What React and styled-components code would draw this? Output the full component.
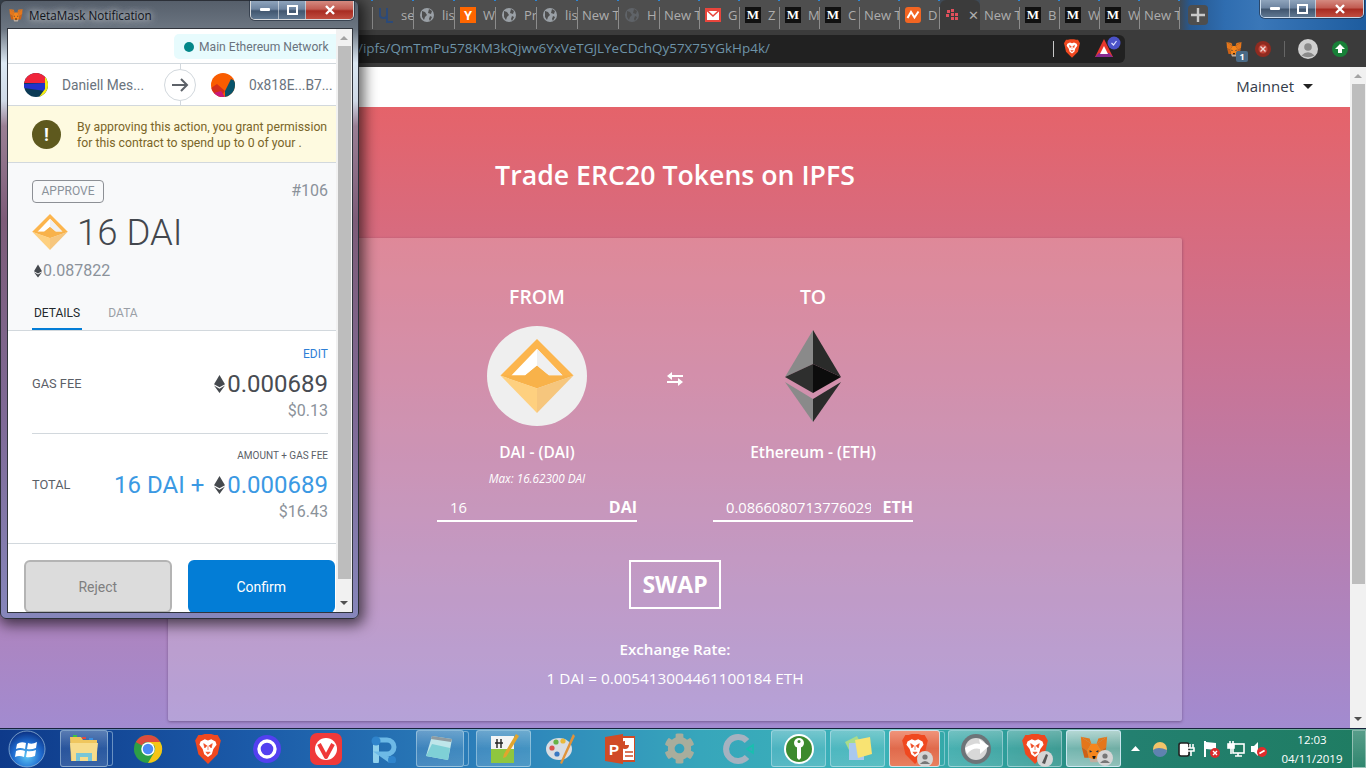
import React from 'react';
import styled, { createGlobalStyle } from 'styled-components';
import { FaCog } from 'react-icons/fa';

const ROBOTO = '"Roboto", "Liberation Sans", sans-serif';
const OPEN = '"Open Sans", "Liberation Sans", sans-serif';

const GlobalStyle = createGlobalStyle`
  html, body { margin: 0; padding: 0; overflow: hidden; }
  body { font-family: ${OPEN}; }
  * { box-sizing: border-box; }
`;

const Desktop = styled.div`
  position: relative;
  width: 1366px;
  height: 768px;
  display: flex;
  flex-direction: column;
  overflow: hidden;
`;

/* ---------- browser chrome ---------- */

const TabStrip = styled.div`
  height: 30px;
  flex: none;
  display: flex;
  align-items: stretch;
  padding-left: 4px;
  background: linear-gradient(90deg, #3f4a56 0, #3f4a56 1180px, #27588f 1190px, #2f6db0 1225px, #3a77b8 1260px, #1d5c9f 1366px);
`;

const Tab = styled.div`
  position: relative;
  width: ${(p) => p.$w}px;
  flex: none;
  display: flex;
  align-items: center;
  padding: 0 0 0 ${(p) => (p.$plain ? 4 : 5)}px;
  overflow: hidden;
  white-space: nowrap;
  font-size: 13px;
  color: #adadad;
  background: ${(p) => (p.$active ? '#3b3b3b' : '#4e4e4e')};
  border-radius: ${(p) => (p.$active ? '6px 6px 0 0' : '0')};
  &::after {
    content: '';
    position: absolute;
    right: 0;
    top: 7px;
    bottom: 1px;
    width: 1px;
    background: ${(p) => (p.$active ? 'transparent' : '#8c8c8c')};
  }
  &::before {
    content: '';
    position: absolute;
    right: 0;
    top: 0;
    width: 2px;
    height: 1px;
    background: #2a86d8;
  }
`;

const TabIcon = styled.span`
  width: 16px;
  height: 16px;
  flex: none;
  margin-right: 7px;
  display: flex;
  align-items: center;
  justify-content: center;
  background: ${(p) => p.$bg || 'transparent'};
  border-radius: ${(p) => p.$round || 0}px;
  color: #fff;
  font: bold 13px ${(p) => (p.$sans ? ROBOTO : '"Liberation Serif", serif')};
`;

const NewTabButton = styled.div`
  width: 20px;
  height: 20px;
  margin: 5px 0 0 8px;
  border-radius: 4px;
  background: #4e4e4e;
  display: flex;
  align-items: center;
  justify-content: center;
`;

const WindowControls = styled.div`
  position: absolute;
  top: 0;
  left: ${(p) => p.$left}px;
  height: ${(p) => p.$h}px;
  display: flex;
  border: 1px solid rgba(255, 255, 255, 0.75);
  border-top: none;
  border-radius: 0 0 5px 5px;
  overflow: hidden;
  box-shadow: 0 0 0 1px rgba(30, 40, 55, 0.6);
`;

const ControlButton = styled.div`
  width: ${(p) => p.$w}px;
  display: flex;
  align-items: center;
  justify-content: center;
  border-right: 1px solid rgba(255, 255, 255, 0.5);
  background: ${(p) =>
    p.$close
      ? 'linear-gradient(180deg, #d58a80 0, #c25c52 45%, #a82c22 55%, #c04d3f 100%)'
      : 'linear-gradient(180deg, #8fa4bc 0, #6d84a0 45%, #41566f 55%, #5f7791 100%)'};
  &:last-child { border-right: none; }
`;

const Toolbar = styled.div`
  height: 37px;
  flex: none;
  background: #3b3b3b;
  display: flex;
  align-items: center;
  padding-left: 340px;
`;

const AddressField = styled.div`
  width: 785px;
  height: 28px;
  background: #212121;
  border-radius: 0 6px 6px 0;
  display: flex;
  align-items: center;
  padding: 0 0 0 18px;
  font-size: 13.45px;
  color: #6d93a8;
  white-space: nowrap;
`;

const UrlText = styled.span`
  width: 696px;
  padding-bottom: 2px;
`;

const AddressDivider = styled.i`
  width: 1px;
  height: 16px;
  background: #c8c8c8;
`;

const AddressIcon = styled.span`
  display: flex;
  margin-left: ${(p) => p.$ml}px;
`;

const ExtensionTray = styled.div`
  display: flex;
  align-items: center;
  margin-left: 101px;
`;

const ExtensionSlot = styled.span`
  position: relative;
  display: flex;
  margin-left: ${(p) => p.$ml}px;
`;

const ExtBadge = styled.span`
  position: absolute;
  right: -6px;
  bottom: -5px;
  width: 12px;
  height: 11px;
  background: #4a6a86;
  color: #fff;
  border-radius: 2px;
  font: bold 9px/11px ${OPEN};
  text-align: center;
`;

const ToolbarSep = styled.i`
  width: 1px;
  height: 16px;
  margin-left: 13px;
  background: #666;
`;

/* ---------- page ---------- */

const PageRow = styled.div`
  flex: 1;
  min-height: 0;
  display: flex;
`;

const Page = styled.div`
  width: 1350px;
  display: flex;
  flex-direction: column;
  background: #fff;
`;

const NavBar = styled.div`
  height: 40px;
  flex: none;
  display: flex;
  align-items: center;
  justify-content: flex-end;
  padding: 0 37px 2px 0;
  color: #333c4a;
  font-size: 15px;
`;

const Caret = styled.i`
  margin-left: 9px;
  width: 0;
  height: 0;
  border: 5px solid transparent;
  border-top: 5px solid #222;
  border-bottom: none;
`;

const Hero = styled.main`
  flex: 1;
  display: flex;
  flex-direction: column;
  align-items: center;
  background: linear-gradient(180deg, #e5636a 0%, #a28bd0 100%);
  color: #fff;
`;

const Title = styled.h1`
  margin: 50px 0 0;
  height: 81px;
  line-height: 35px;
  font-size: 26.7px;
  font-weight: 600;
`;

const Card = styled.section`
  width: 1014px;
  height: 483px;
  border-radius: 2px;
  background: rgba(255, 255, 255, 0.2);
  box-shadow: 0 1px 3px rgba(60, 30, 70, 0.45);
  display: flex;
  flex-direction: column;
  align-items: center;
  padding-top: 46px;
`;

const SwapGrid = styled.div`
  display: grid;
  grid-template-columns: 200px 76px 200px;
`;

const Side = styled.div`
  display: flex;
  flex-direction: column;
  align-items: center;
`;

const SideHead = styled.h2`
  margin: 0;
  height: 26px;
  line-height: 26px;
  font-size: 19.4px;
  font-weight: 600;
`;

const TokenCircle = styled.div`
  width: 100px;
  height: 100px;
  margin-top: 16px;
  border-radius: 50%;
  background: ${(p) => (p.$plain ? 'transparent' : '#efefef')};
  display: flex;
  align-items: center;
  justify-content: center;
`;

const TokenName = styled.div`
  margin-top: 16px;
  height: 20px;
  line-height: 20px;
  font-size: 15.5px;
  font-weight: 600;
`;

const MaxLabel = styled.div`
  margin-top: 8px;
  height: 16px;
  line-height: 16px;
  font-size: 11.7px;
  font-style: italic;
`;

const AmountRow = styled.div`
  width: 200px;
  height: 27px;
  margin-top: 9px;
  border-bottom: 2px solid #fff;
  display: flex;
  align-items: center;
  justify-content: space-between;
  padding: 0 0 1px 13px;
  font-size: 14.7px;
  white-space: nowrap;
`;

const AmountValue = styled.span`
  width: 145px;
  overflow: hidden;
`;

const AmountUnit = styled.b`
  font-size: 16px;
  font-weight: 700;
`;

const SwapArrowsCell = styled.div`
  display: flex;
  justify-content: center;
  padding-top: 88px;
`;

const SwapButton = styled.button`
  width: 92px;
  height: 49px;
  margin-top: 38px;
  border: 2px solid #fff;
  background: transparent;
  color: #fff;
  font: 700 23px ${OPEN};
  padding: 0 0 1px;
`;

const RateLabel = styled.div`
  margin-top: 30px;
  height: 20px;
  line-height: 20px;
  font-size: 15.2px;
  font-weight: 600;
`;

const RateValue = styled.div`
  margin-top: 9px;
  height: 20px;
  line-height: 20px;
  font-size: 15.3px;
`;

const PageScroll = styled.div`
  width: 16px;
  background: #f1f1f1;
  display: flex;
  flex-direction: column;
  align-items: center;
`;

const ScrollArrow = styled.i`
  width: 0;
  height: 0;
  border-left: 4px solid transparent;
  border-right: 4px solid transparent;
  ${(p) => (p.$down ? 'border-top: 4px solid #505050;' : 'border-bottom: 4px solid #a3a3a3;')}
  margin: ${(p) => (p.$down ? 'auto 0 7px' : '7px 0 6px')};
`;

const ScrollThumb = styled.div`
  width: 13px;
  height: ${(p) => p.$h}px;
  background: #bdbdbd;
  flex: none;
`;

/* ---------- taskbar ---------- */

const Taskbar = styled.footer`
  height: 40px;
  flex: none;
  display: flex;
  align-items: stretch;
  border-top: 1px solid #17233c;
  box-shadow: inset 0 1px 0 rgba(255, 255, 255, 0.35);
  background: linear-gradient(90deg, #0e3a8a 0, #1b5aa8 250px, #2d82bb 500px, #37a6bb 700px, #3bb3b8 880px, #2f9f9c 1000px, #238070 1130px, #1f7c62 1366px);
`;

const TaskButton = styled.div`
  position: relative;
  width: ${(p) => p.$w}px;
  margin: 1px 0 1px ${(p) => p.$ml || 0}px;
  flex: none;
  display: flex;
  align-items: center;
  justify-content: center;
  border: 1px solid rgba(210, 235, 245, ${(p) => (p.$light || p.$hot ? 0.9 : 0.45)});
  border-radius: 3px;
  background: ${(p) => {
    if (p.$hot) return 'linear-gradient(180deg, #f0947a, #e06a4c 50%, #e9805f)';
    if (p.$light) return 'linear-gradient(180deg, rgba(255,255,255,.65), rgba(255,255,255,.35) 50%, rgba(255,255,255,.5))';
    return 'linear-gradient(180deg, rgba(255,255,255,.3), rgba(255,255,255,.1) 50%, rgba(255,255,255,.16))';
  }};
  ${(p) =>
    p.$stack &&
    `&::after {
      content: '';
      position: absolute;
      top: 0;
      bottom: 0;
      right: -6px;
      width: 4px;
      border: 1px solid rgba(210, 235, 245, .45);
      border-left: none;
      border-radius: 0 3px 3px 0;
    }`}
`;

const TaskSlot = styled.div`
  width: ${(p) => p.$w}px;
  margin-left: ${(p) => p.$ml || 0}px;
  flex: none;
  display: flex;
  align-items: center;
  justify-content: center;
`;

const TrayArea = styled.div`
  margin-left: 4px;
  flex: 1;
  display: flex;
  align-items: center;
  color: #fff;
`;

const TrayItem = styled.span`
  display: flex;
  margin-left: ${(p) => p.$ml}px;
`;

const Clock = styled.div`
  margin-left: 9px;
  width: 70px;
  text-align: center;
  font-size: 11.5px;
  line-height: 19px;
`;

const ShowDesktop = styled.div`
  width: 14px;
  margin-left: auto;
  align-self: stretch;
  margin-top: 1px;
  border: 1px solid rgba(255, 255, 255, 0.4);
  background: linear-gradient(180deg, rgba(255,255,255,.25), rgba(255,255,255,.08));
`;

const StackedIcon = styled.span`
  position: relative;
  display: flex;
`;

const UserOverlay = styled.span`
  position: absolute;
  right: -5px;
  bottom: -3px;
  width: 16px;
  height: 16px;
  border-radius: 50%;
  background: #d5d5d5;
  display: flex;
  align-items: center;
  justify-content: center;
`;

/* ---------- metamask popup ---------- */

const Popup = styled.div`
  position: absolute;
  left: 0;
  top: 0;
  width: 359px;
  height: 619px;
  padding: 28px 6px 6px 7px;
  border: 1px solid #2c3038;
  border-radius: 6px;
  box-shadow: 2px 3px 14px 3px rgba(0, 0, 0, 0.62);
  background: linear-gradient(180deg, #565f6b 0, #6b7581 28px, #dce8f3 62px, #cfd9e6 100px, #9a7f94 125px, #7d5c78 220px, #7f6a97 420px, #8686bb 100%);
`;

const PopupTitle = styled.div`
  position: absolute;
  left: 8px;
  top: 6px;
  display: flex;
  align-items: center;
  gap: 6px;
  font-size: 11.7px;
  line-height: 16px;
  color: #10131a;
  text-shadow: 0 0 7px #c9ccd0, 0 0 7px #c9ccd0;
`;

const PopupClient = styled.div`
  width: 100%;
  height: 100%;
  display: flex;
  background: #fff;
  outline: 1px solid #30343c;
  overflow: hidden;
  font-family: ${ROBOTO};
`;

const PopupBody = styled.div`
  width: 328px;
  flex: none;
  display: flex;
  flex-direction: column;
`;

const NetworkRow = styled.div`
  height: 35px;
  flex: none;
  display: flex;
  justify-content: flex-end;
  padding-top: 5px;
  border-bottom: 1px solid #d2d8dd;
`;

const NetworkPill = styled.div`
  width: 162px;
  height: 25px;
  background: #e7fbfd;
  border-radius: 5px 0 0 5px;
  display: flex;
  align-items: center;
  padding-left: 10px;
  font-size: 12.1px;
  color: #6a737d;
  white-space: nowrap;
`;

const NetDot = styled.i`
  width: 10px;
  height: 10px;
  margin-right: 5px;
  border-radius: 50%;
  background: #038789;
`;

const AccountsRow = styled.div`
  position: relative;
  height: 42px;
  flex: none;
  display: flex;
  align-items: center;
  border-bottom: 1px solid #d2d8dd;
  font-size: 13.75px;
  color: #6a737d;
  white-space: nowrap;
`;

const AccountSide = styled.div`
  width: ${(p) => p.$w}px;
  display: flex;
  align-items: center;
  padding-left: ${(p) => p.$pl}px;
  gap: ${(p) => p.$gap}px;
`;

const ArrowCircle = styled.div`
  position: relative;
  width: 32px;
  height: 32px;
  flex: none;
  border: 1px solid #d2d8dd;
  border-radius: 50%;
  background: #fff;
  display: flex;
  align-items: center;
  justify-content: center;
  &::before, &::after {
    content: '';
    position: absolute;
    left: 14.5px;
    width: 1px;
    height: 5px;
    background: #d2d8dd;
  }
  &::before { top: -6px; }
  &::after { bottom: -6px; }
`;

const WarnRow = styled.div`
  height: 57px;
  flex: none;
  display: flex;
  align-items: center;
  padding-left: 24px;
  gap: 16px;
  background: #fefae0;
  border-bottom: 1px solid #d2d8dd;
  font-size: 12.25px;
  line-height: 16px;
  color: #7a6528;
  white-space: nowrap;
`;

const WarnText = styled.div`
  padding-top: 2px;
`;

const WarnIcon = styled.span`
  width: 29px;
  height: 29px;
  flex: none;
  border-radius: 50%;
  background: #5e591e;
  color: #fff;
  font: bold 18px/29px ${ROBOTO};
  text-align: center;
`;

const Summary = styled.div`
  height: 168px;
  flex: none;
  padding: 17px 8px 0 24px;
  background: #f8f9fa;
  border-bottom: 1px solid #d2d8dd;
  display: flex;
  flex-direction: column;
`;

const SummaryTop = styled.div`
  height: 23px;
  display: flex;
  align-items: center;
  justify-content: space-between;
  color: #8b929a;
`;

const ActionBadge = styled.span`
  width: 72px;
  height: 23px;
  border: 1px solid #8d9095;
  border-radius: 4px;
  font-size: 12px;
  line-height: 21px;
  text-align: center;
`;

const Nonce = styled.span`
  font-size: 16px;
  padding-bottom: 2px;
`;

const BigAmount = styled.div`
  margin-top: 11px;
  height: 36px;
  display: flex;
  align-items: center;
  gap: 9px;
  font-size: 36.5px;
  font-weight: 300;
  color: #43474d;
`;

const EthAmount = styled.div`
  margin-top: 11px;
  height: 19px;
  display: flex;
  align-items: center;
  gap: 1px;
  padding-left: 2px;
  font-size: 16px;
  color: #8b929a;
`;

const TabsRow = styled.div`
  margin-top: auto;
  height: 25px;
  display: flex;
  font-size: 12px;
`;

const DetailTab = styled.div`
  width: ${(p) => p.$w}px;
  margin-right: ${(p) => p.$mr || 0}px;
  padding-top: 1px;
  text-align: center;
  color: ${(p) => (p.$on ? '#24292e' : '#9a9fa6')};
  border-bottom: 2px solid ${(p) => (p.$on ? '#037dd6' : 'transparent')};
`;

const Details = styled.div`
  height: 213px;
  flex: none;
  padding: 0 8px 0 24px;
  border-bottom: 1px solid #d2d8dd;
  display: flex;
  flex-direction: column;
`;

const SmallRight = styled.div`
  margin-top: ${(p) => p.$mt}px;
  height: 14px;
  line-height: 14px;
  text-align: right;
  font-size: ${(p) => p.$size}px;
  color: ${(p) => p.$color};
`;

const FeeRow = styled.div`
  margin-top: ${(p) => p.$mt}px;
  height: 28px;
  display: flex;
  align-items: center;
  justify-content: space-between;
`;

const FeeLabel = styled.span`
  padding-bottom: 2px;
  font-size: 12.8px;
  color: #5b6067;
`;

const FeeValue = styled.span`
  display: flex;
  align-items: center;
  gap: 2px;
  font-size: 24px;
  color: ${(p) => (p.$blue ? '#3b99e3' : '#484c52')};
`;

const TokenPart = styled.span`
  margin-right: 8px;
`;

const FiatValue = styled.div`
  height: 20px;
  margin-top: 3px;
  line-height: 20px;
  text-align: right;
  font-size: 16px;
  color: #8b929a;
`;

const Divider = styled.hr`
  width: 100%;
  margin: 12px 0 0;
  border: none;
  border-top: 1px solid #d2d8dd;
`;

const PopupFooter = styled.div`
  flex: 1;
  display: flex;
  padding: 16px 1px 0 16px;
  gap: 16px;
  overflow: hidden;
`;

const PopupButton = styled.button`
  flex: 1;
  height: 53px;
  padding: 0;
  border-radius: 6px;
  font: 14px ${ROBOTO};
  border: 2px solid ${(p) => (p.$primary ? '#037dd6' : '#b4b4b4')};
  background: ${(p) => (p.$primary ? '#037dd6' : '#dcdcdc')};
  color: ${(p) => (p.$primary ? '#fff' : '#7f7f7f')};
`;

const PopupScroll = styled(PageScroll)`
  flex: none;
`;

/* ---------- drawings ---------- */

const DaiMark = ({ size }) => (
  <svg width={size} height={size} viewBox="13 13 74 75">
    <polygon points="50,13 87,50 50,63 13,50" fill="#fcb54d" />
    <polygon points="50,23 76,50 62,50 50,40 38,50 24,50" fill="#fff" />
    <polygon points="50,23 76,50 62,50 50,40" fill="#f0f0f0" />
    <polygon points="13,50 38,50 50,40 62,50 87,50 50,63" fill="#f8b24a" />
    <polygon points="13,50 50,63 50,88" fill="#fed07f" />
    <polygon points="87,50 50,63 50,88" fill="#f6c67d" />
  </svg>
);

const EthLogo = () => (
  <svg width="56" height="92" viewBox="0 0 56 92">
    <polygon points="28,0 0,47 28,34" fill="#8a8a8a" />
    <polygon points="28,0 56,47 28,34" fill="#2a2b2a" />
    <polygon points="0,47 28,34 28,63" fill="#2e2f2e" />
    <polygon points="56,47 28,34 28,63" fill="#0c0c0c" />
    <polygon points="0,52 28,69 28,92" fill="#8a8a8a" />
    <polygon points="56,52 28,69 28,92" fill="#2a2b2a" />
  </svg>
);

const EthGlyph = ({ w = 11, h = 18 }) => (
  <svg width={w} height={h} viewBox="0 0 56 92">
    <polygon points="28,0 0,47 28,63 56,47" fill="#45494e" />
    <polygon points="0,54 28,70 56,54 28,92" fill="#45494e" />
  </svg>
);

const SwapArrows = () => (
  <svg width="16" height="14" viewBox="0 0 16 14">
    <path d="M5 0 L0 4 L5 8 V5 H16 V3 H5Z" fill="#fff" />
    <path d="M11 6 L16 10 L11 14 V11 H0 V9 H11Z" fill="#fff" />
  </svg>
);

const Globe = ({ dim }) => (
  <svg width="16" height="16" viewBox="0 0 16 16">
    <circle cx="8" cy="8" r="7" fill={dim ? '#5f6368' : '#9aa0a6'} />
    <path d="M3 4l3 1 2 3-2 2-1 3-2-3zM10 2l3 2-1 3-3-1zM11 9l2 1-2 4-1-2z" fill="#4e4e4e" />
  </svg>
);

const Gmail = () => (
  <svg width="16" height="14" viewBox="0 0 16 14">
    <rect width="16" height="14" fill="#e8453c" />
    <rect x="2" y="3" width="12" height="9" fill="#fff" />
    <path d="M2 2.5 L8 8 L14 2.5" stroke="#e8453c" strokeWidth="1.6" fill="none" />
  </svg>
);

const Squiggle = () => (
  <svg width="16" height="16" viewBox="0 0 16 16">
    <rect width="16" height="16" rx="3" fill="#f26522" />
    <path d="M2.5 11 L6 5 L9.5 10.5 L13.5 4.5" stroke="#fff" strokeWidth="2" fill="none" />
  </svg>
);

const DotsFavicon = () => (
  <svg width="16" height="16" viewBox="0 0 16 16" fill="#e0505c">
    <rect x="2" y="3" width="3" height="3" />
    <rect x="6" y="2" width="3" height="3" />
    <rect x="1" y="7" width="3" height="3" />
    <rect x="6" y="6" width="3" height="3" />
    <rect x="10" y="6" width="3" height="3" />
    <rect x="6" y="10" width="3" height="3" />
    <rect x="10" y="10" width="3" height="3" />
  </svg>
);

const UlFavicon = () => (
  <svg width="16" height="17" viewBox="0 0 16 17" fill="none" stroke="#2c4a78" strokeWidth="2">
    <path d="M2 1 V8 Q2 11 6 11 Q9 11 9 8 V1" />
    <path d="M9 6 V15 H15" />
  </svg>
);

const Fox = ({ size }) => (
  <svg width={size} height={size} viewBox="0 0 32 32">
    <polygon points="1,2 13,10 11,4" fill="#e2761b" />
    <polygon points="31,2 19,10 21,4" fill="#e2761b" />
    <polygon points="1,2 13,10 8,18 2,14" fill="#e4761b" />
    <polygon points="31,2 19,10 24,18 30,14" fill="#e4761b" />
    <polygon points="13,10 19,10 24,18 22,26 16,28 10,26 8,18" fill="#f6851b" />
    <polygon points="8,18 2,14 5,26 10,26" fill="#cd6116" />
    <polygon points="24,18 30,14 27,26 22,26" fill="#cd6116" />
    <polygon points="10,26 16,28 22,26 20,31 12,31" fill="#c0ad9e" />
    <polygon points="11,17 14,19 11,20" fill="#233447" />
    <polygon points="21,17 18,19 21,20" fill="#233447" />
    <polygon points="14,24 18,24 17,27 15,27" fill="#161616" />
  </svg>
);

const BraveLion = ({ w, h }) => (
  <svg width={w} height={h} viewBox="0 0 24 28">
    <path d="M6 1 L9 0 H15 L18 1 L21 1 L24 6 L23 10 L21 19 L15 25 L12 28 L9 25 L3 19 L1 10 L0 6 L3 1Z" fill="#f0481f" />
    <path d="M5 7 L9 5 L12 6 L15 5 L19 7 L20 10 L17 14 L15.5 19 L12 21.5 L8.5 19 L7 14 L4 10Z" fill="#fff" />
    <path d="M8 9 L11 11 L9 13Z M16 9 L13 11 L15 13Z M10 17 H14 L12 19Z M12 11 V15" fill="#f0481f" stroke="#f0481f" strokeWidth=".6" />
  </svg>
);

const BatTriangle = () => (
  <svg width="30" height="26" viewBox="0 0 30 26">
    <polygon points="9,3 18,21 0,21" fill="#e8372c" />
    <polygon points="0,21 18,21 14,17 4,17" fill="#8a2a90" />
    <polygon points="9,10 13,18 5,18" fill="#fff" />
    <circle cx="19" cy="7" r="6.5" fill="#4b52c8" />
    <path d="M16.5 7 L18.5 9 L21.5 5" stroke="#dfe3ff" strokeWidth="1.2" fill="none" />
  </svg>
);

const RoundBadge = ({ r, bg, children }) => (
  <svg width={r * 2} height={r * 2} viewBox={`0 0 ${r * 2} ${r * 2}`}>
    <circle cx={r} cy={r} r={r} fill={bg} />
    {children}
  </svg>
);

const Identicon = ({ kind }) => (
  <svg width="24" height="24" viewBox="0 0 24 24">
    <defs>
      <clipPath id={`id-${kind}`}>
        <circle cx="12" cy="12" r="12" />
      </clipPath>
    </defs>
    {kind === 'a' ? (
      <g clipPath="url(#id-a)">
        <rect width="24" height="24" fill="#0b3a55" />
        <rect y="0" width="22" height="10" fill="#f0243a" />
        <polygon points="0,11 21,10 21,18 0,15" fill="#2233cc" />
        <polygon points="21,2 24,2 24,22 15,24 21,16" fill="#f6ee10" />
      </g>
    ) : (
      <g clipPath="url(#id-b)">
        <rect width="24" height="24" fill="#f95c00" />
        <polygon points="0,15 6,11 14,18 10,24 0,24" fill="#d42f1a" />
        <polygon points="3,20 10,18 14,24 4,24" fill="#c9197a" />
        <polygon points="20,6 24,8 24,24 14,24 14,18" fill="#08536a" />
      </g>
    )}
  </svg>
);

const Chrome = () => (
  <svg width="30" height="30" viewBox="0 0 32 32">
    <circle cx="16" cy="16" r="15" fill="#2d9f46" />
    <path d="M16 1 A15 15 0 0 1 29 8.5 H16 A7.5 7.5 0 0 0 9.5 12.2 L3 8.5 A15 15 0 0 1 16 1Z" fill="#dd4b3e" />
    <path d="M29 8.5 A15 15 0 0 1 16 31 L22.5 19.7 A7.5 7.5 0 0 0 22.5 12 L16 8.5Z" fill="#f5c518" />
    <circle cx="16" cy="16" r="7.2" fill="#fff" />
    <circle cx="16" cy="16" r="5.6" fill="#4c8bf5" />
  </svg>
);

const Orb = () => (
  <svg width="38" height="38" viewBox="0 0 38 38">
    <defs>
      <radialGradient id="orb" cx="50%" cy="70%" r="70%">
        <stop offset="0" stopColor="#5cc6f5" />
        <stop offset=".55" stopColor="#1f6cd0" />
        <stop offset="1" stopColor="#0b2f80" />
      </radialGradient>
    </defs>
    <circle cx="19" cy="19" r="18" fill="url(#orb)" stroke="#9fc3e0" strokeOpacity=".7" />
    <path d="M9 14 Q13 11 18 13 L17 19 Q12 17 8 19Z M20 13 Q24 15 29 12 L28 18 Q23 20 19 19Z M8 21 Q12 19 17 21 L16 27 Q11 25 7 27Z M19 21 Q23 22 28 20 L27 26 Q22 28 18 27Z" fill="#fff" />
  </svg>
);

const Folder = () => (
  <svg width="32" height="32" viewBox="0 0 32 32">
    <path d="M2 4 H13 L15 7 H29 V28 H3Z" fill="#efc65e" />
    <rect x="5" y="2" width="4" height="2" fill="#3ec43e" />
    <rect x="14" y="4" width="4" height="2" fill="#e0483e" />
    <rect x="21" y="5" width="4" height="2" fill="#3b8fe0" />
    <path d="M2 10 H30 L28 28 H4Z" fill="#f7dc8c" />
    <path d="M8 20 H24 V28 H20 V24 H12 V28 H8Z" fill="#79c6d8" />
  </svg>
);

const TaskSvg = ({ w = 28, h = 28, view = '0 0 28 28', children }) => (
  <svg width={w} height={h} viewBox={view}>
    {children}
  </svg>
);

const UserGlyph = () => (
  <svg width="12" height="12">
    <circle cx="6" cy="4" r="2.6" fill="#777" />
    <path d="M1 11 Q6 5 11 11Z" fill="#777" />
  </svg>
);

const HIDDEN_TAB = { label: '', plain: true };

const TABS = [
  ...Array(8).fill(HIDDEN_TAB),
  { label: 'Re', plain: true },
  { icon: <UlFavicon />, label: 'se' },
  { icon: <Globe />, label: 'lis' },
  { icon: 'Y', bg: '#ff6600', label: 'W', sans: true },
  { icon: <Globe />, label: 'Pr' },
  { icon: <Globe />, label: 'lis' },
  { label: 'New T', plain: true },
  { icon: <Globe dim />, label: 'H' },
  { label: 'New T', plain: true },
  { icon: <Gmail />, label: 'G' },
  { icon: 'M', bg: '#111', label: 'Z' },
  { icon: 'M', bg: '#111', label: 'M' },
  { icon: 'M', bg: '#111', label: 'C' },
  { label: 'New T', plain: true },
  { icon: <Squiggle />, label: 'D' },
  { icon: <DotsFavicon />, label: '✕', active: true },
  { label: 'New T', plain: true },
  { icon: 'M', bg: '#111', label: 'B' },
  { icon: 'M', bg: '#111', label: 'W' },
  { icon: 'M', bg: '#111', label: 'W' },
  { label: 'New T', plain: true },
];

const WinGlyphs = ({ w }) => (
  <>
    <ControlButton $w={w[0]}>
      <svg width="10" height="4"><rect width="10" height="3" rx="1" fill="#fff" /></svg>
    </ControlButton>
    <ControlButton $w={w[1]}>
      <svg width="11" height="10"><rect x="1" y="1" width="9" height="8" fill="none" stroke="#fff" strokeWidth="2" /></svg>
    </ControlButton>
    <ControlButton $w={w[2]} $close>
      <svg width="12" height="10"><path d="M2 1 L10 9 M10 1 L2 9" stroke="#fff" strokeWidth="2.4" /></svg>
    </ControlButton>
  </>
);

const MetaMaskPopup = () => (
  <Popup>
    <PopupTitle>
      <Fox size={14} />
      MetaMask Notification
    </PopupTitle>
    <WindowControls $left={249} $h={19}>
      <WinGlyphs w={[28, 27, 47]} />
    </WindowControls>
    <PopupClient>
      <PopupBody>
        <NetworkRow>
          <NetworkPill>
            <NetDot />
            Main Ethereum Network
          </NetworkPill>
        </NetworkRow>
        <AccountsRow>
          <AccountSide $w={156} $pl={16} $gap={14}>
            <Identicon kind="a" />
            Daniell Mes...
          </AccountSide>
          <ArrowCircle>
            <svg width="18" height="16" viewBox="0 0 18 16" fill="none" stroke="#5d6269" strokeWidth="2">
              <path d="M1 8 H16 M10 2 L16 8 L10 14" />
            </svg>
          </ArrowCircle>
          <AccountSide $w={140} $pl={15} $gap={14}>
            <Identicon kind="b" />
            0x818E...B7...
          </AccountSide>
        </AccountsRow>
        <WarnRow>
          <WarnIcon>!</WarnIcon>
          <WarnText>
            By approving this action, you grant permission
            <br />
            for this contract to spend up to 0 of your .
          </WarnText>
        </WarnRow>
        <Summary>
          <SummaryTop>
            <ActionBadge>APPROVE</ActionBadge>
            <Nonce>#106</Nonce>
          </SummaryTop>
          <BigAmount>
            <DaiMark size={36} />
            16 DAI
          </BigAmount>
          <EthAmount>
            <EthGlyph w={8} h={14} />
            0.087822
          </EthAmount>
          <TabsRow>
            <DetailTab $w={50} $mr={25} $on>DETAILS</DetailTab>
            <DetailTab $w={32}>DATA</DetailTab>
          </TabsRow>
        </Summary>
        <Details>
          <SmallRight $mt={16} $size={12} $color="#2f7fd6">EDIT</SmallRight>
          <FeeRow $mt={9}>
            <FeeLabel>GAS FEE</FeeLabel>
            <FeeValue><EthGlyph />0.000689</FeeValue>
          </FeeRow>
          <FiatValue>$0.13</FiatValue>
          <Divider />
          <SmallRight $mt={15} $size={10} $color="#5b6067">AMOUNT + GAS FEE</SmallRight>
          <FeeRow $mt={8}>
            <FeeLabel>TOTAL</FeeLabel>
            <FeeValue $blue><TokenPart>16 DAI +</TokenPart><EthGlyph />0.000689</FeeValue>
          </FeeRow>
          <FiatValue>$16.43</FiatValue>
        </Details>
        <PopupFooter>
          <PopupButton>Reject</PopupButton>
          <PopupButton $primary>Confirm</PopupButton>
        </PopupFooter>
      </PopupBody>
      <PopupScroll>
        <ScrollArrow />
        <ScrollThumb $h={533} />
        <ScrollArrow $down />
      </PopupScroll>
    </PopupClient>
  </Popup>
);

const App = () => (
  <Desktop>
    <GlobalStyle />
    <TabStrip>
      {TABS.map((t, i) => (
        <Tab key={i} $w={i < 16 ? 41 : 40} $plain={t.plain} $active={t.active}>
          {t.icon && <TabIcon $bg={t.bg} $sans={t.sans}>{t.icon}</TabIcon>}
          {t.label}
        </Tab>
      ))}
      <NewTabButton>
        <svg width="14" height="14"><path d="M7 0 V14 M0 7 H14" stroke="#c9c9c9" strokeWidth="2.4" /></svg>
      </NewTabButton>
    </TabStrip>
    <WindowControls $left={1260} $h={18}>
      <WinGlyphs w={[29, 26, 47]} />
    </WindowControls>
    <Toolbar>
      <AddressField>
        <UrlText>/ipfs/QmTmPu578KM3kQjwv6YxVeTGJLYeCDchQy57X75YGkHp4k/</UrlText>
        <AddressDivider />
        <AddressIcon $ml={10}><BraveLion w={16} h={19} /></AddressIcon>
        <AddressIcon $ml={15}><BatTriangle /></AddressIcon>
      </AddressField>
      <ExtensionTray>
        <ExtensionSlot $ml={0}>
          <Fox size={16} />
          <ExtBadge>1</ExtBadge>
        </ExtensionSlot>
        <ExtensionSlot $ml={13}>
          <RoundBadge r={8} bg="#8f2b20">
            <circle cx="8" cy="8" r="4.5" fill="#c4473a" />
            <path d="M5.5 5.5 L10.5 10.5 M10.5 5.5 L5.5 10.5" stroke="#f1d7d3" strokeWidth="1.4" />
          </RoundBadge>
        </ExtensionSlot>
        <ToolbarSep />
        <ExtensionSlot $ml={13}>
          <RoundBadge r={10} bg="#cfcfcf">
            <circle cx="10" cy="8" r="3.8" fill="#8a8a8a" />
            <path d="M3.5 16.5 Q10 10 16.5 16.5 Q10 20 3.5 16.5Z" fill="#8a8a8a" />
          </RoundBadge>
        </ExtensionSlot>
        <ExtensionSlot $ml={14}>
          <RoundBadge r={8} bg="#188038">
            <path d="M8 3 L13 8 H10 V12 H6 V8 H3Z" fill="#fff" />
          </RoundBadge>
        </ExtensionSlot>
      </ExtensionTray>
    </Toolbar>
    <PageRow>
      <Page>
        <NavBar>
          Mainnet
          <Caret />
        </NavBar>
        <Hero>
          <Title>Trade ERC20 Tokens on IPFS</Title>
          <Card>
            <SwapGrid>
              <Side>
                <SideHead>FROM</SideHead>
                <TokenCircle><DaiMark size={74} /></TokenCircle>
                <TokenName>DAI - (DAI)</TokenName>
                <MaxLabel>Max: 16.62300 DAI</MaxLabel>
                <AmountRow>
                  <AmountValue>16</AmountValue>
                  <AmountUnit>DAI</AmountUnit>
                </AmountRow>
              </Side>
              <SwapArrowsCell><SwapArrows /></SwapArrowsCell>
              <Side>
                <SideHead>TO</SideHead>
                <TokenCircle $plain><EthLogo /></TokenCircle>
                <TokenName>Ethereum - (ETH)</TokenName>
                <MaxLabel />
                <AmountRow>
                  <AmountValue>0.086608071377602976</AmountValue>
                  <AmountUnit>ETH</AmountUnit>
                </AmountRow>
              </Side>
            </SwapGrid>
            <SwapButton>SWAP</SwapButton>
            <RateLabel>Exchange Rate:</RateLabel>
            <RateValue>1 DAI = 0.005413004461100184 ETH</RateValue>
          </Card>
        </Hero>
      </Page>
      <PageScroll>
        <ScrollArrow />
        <ScrollThumb $h={500} />
        <ScrollArrow $down />
      </PageScroll>
    </PageRow>
    <Taskbar>
      <TaskSlot $w={54}><Orb /></TaskSlot>
      <TaskButton $w={48} $ml={6} $stack><Folder /></TaskButton>
      <TaskSlot $w={60} $ml={10}><Chrome /></TaskSlot>
      <TaskSlot $w={59}><BraveLion w={26} h={30} /></TaskSlot>
      <TaskSlot $w={59}>
        <RoundBadge r={14} bg="#5340f0">
          <circle cx="14" cy="14" r="8" fill="none" stroke="#fff" strokeWidth="3.4" />
        </RoundBadge>
      </TaskSlot>
      <TaskSlot $w={59}>
        <TaskSvg w={32} h={32} view="0 0 32 32">
          <rect width="32" height="32" rx="7" fill="#ef3939" />
          <circle cx="16" cy="16" r="11" fill="#fff" />
          <path d="M9 11 L16 24 L23 11" fill="none" stroke="#ef3939" strokeWidth="4" strokeLinejoin="round" />
        </TaskSvg>
      </TaskSlot>
      <TaskSlot $w={59}>
        <TaskSvg>
          <path d="M5 6 V26" stroke="#8fd0ec" strokeWidth="6" strokeLinecap="round" />
          <path d="M5 5 H16 A7 7 0 0 1 16 19 H10 L20 26" fill="none" stroke="#6db9e6" strokeWidth="5" strokeLinecap="round" />
          <circle cx="5" cy="6" r="4.5" fill="#2f84cc" />
          <circle cx="21" cy="25" r="4" fill="#2f84cc" />
        </TaskSvg>
      </TaskSlot>
      <TaskButton $w={48} $ml={2} $stack>
        <TaskSvg w={32} h={30} view="0 0 32 30">
          <polygon points="8,2 28,5 24,26 2,22" fill="#bfe6ea" />
          <polygon points="8,2 28,5 27,8 7,5" fill="#8e9aa0" />
          <polygon points="2,22 24,26 26,14 8,10" fill="#7fd0d6" />
        </TaskSvg>
      </TaskButton>
      <TaskButton $w={55} $ml={12}>
        <TaskSvg w={30} h={32} view="0 0 30 32">
          <rect x="2" y="3" width="23" height="27" fill="#f4f4f4" />
          <rect x="2" y="16" width="23" height="14" fill="#8fc63f" />
          <path d="M8 6 V15 M12 6 V15 M6 10 H14" stroke="#222" strokeWidth="1.4" />
          <polygon points="27,1 30,3 17,24 14,25 15,21" fill="#e2a52d" />
        </TaskSvg>
      </TaskButton>
      <TaskSlot $w={59}>
        <TaskSvg w={30} h={32} view="0 0 30 32">
          <ellipse cx="13" cy="16" rx="13" ry="11" fill="#d9dde2" />
          <circle cx="6" cy="15" r="2.6" fill="#d9534f" />
          <circle cx="10" cy="9" r="2.6" fill="#67b346" />
          <circle cx="17" cy="8" r="2.6" fill="#e9b93a" />
          <circle cx="11" cy="21" r="2.6" fill="#3a78c2" />
          <path d="M27 1 L29 3 L16 31 L14 30Z" fill="#e0933a" />
        </TaskSvg>
      </TaskSlot>
      <TaskSlot $w={60}>
        <TaskSvg w={30} h={30} view="0 0 30 30">
          <rect x="10" y="3" width="20" height="24" fill="#fff" stroke="#d04b26" strokeWidth="2" />
          <path d="M20 7 a4 4 0 1 0 4 4 h-4z" fill="#d04b26" />
          <path d="M20 18 H28 M20 22 H28" stroke="#d04b26" strokeWidth="1.6" />
          <polygon points="0,3 18,0 18,30 0,27" fill="#d04b26" />
          <text x="4" y="21" fontSize="15" fontWeight="700" fill="#fff" fontFamily="Liberation Sans, sans-serif">P</text>
        </TaskSvg>
      </TaskSlot>
      <TaskSlot $w={59}><FaCog size={31} color="#a8ad9c" /></TaskSlot>
      <TaskSlot $w={59}>
        <TaskSvg w={32} h={32} view="0 0 32 32">
          <path d="M24 8 A12 12 0 1 0 24 24" fill="none" stroke="#a5b2c0" strokeWidth="6" />
          <polygon points="30,12 30,20 24,16" fill="none" stroke="#18c0ae" strokeWidth="1.6" />
        </TaskSvg>
      </TaskSlot>
      <TaskButton $w={55} $ml={3}>
        <RoundBadge r={15} bg="#fff">
          <circle cx="15" cy="15" r="13" fill="#3d8a2e" />
          <circle cx="15" cy="9" r="5" fill="#fff" />
          <circle cx="15" cy="7.5" r="1.5" fill="#3d8a2e" />
          <path d="M13 12 H17 V24 L15 26 L13 24Z" fill="#fff" />
        </RoundBadge>
      </TaskButton>
      <TaskButton $w={55} $ml={4}>
        <TaskSvg w={32} h={30} view="0 0 32 30">
          <polygon points="3,8 15,2 20,12 8,18" fill="#a8dc8a" />
          <rect x="7" y="9" width="15" height="17" fill="#a9c8ee" />
          <polygon points="13,6 28,3 30,20 16,24" fill="#f8e372" />
        </TaskSvg>
      </TaskButton>
      <TaskButton $w={51} $ml={4} $stack $hot>
        <StackedIcon>
          <BraveLion w={26} h={30} />
          <UserOverlay><UserGlyph /></UserOverlay>
        </StackedIcon>
      </TaskButton>
      <TaskButton $w={55} $ml={8}>
        <RoundBadge r={15} bg="#6d7478">
          <circle cx="15" cy="15" r="11" fill="#d8d8d8" />
          <path d="M4 14 Q14 8 19 10 L18 5 L28 12 L19 20 L19 15 Q12 13 6 20Z" fill="#fff" />
        </RoundBadge>
      </TaskButton>
      <TaskButton $w={55} $ml={4}>
        <StackedIcon>
          <BraveLion w={26} h={30} />
          <UserOverlay>
            <svg width="12" height="12"><path d="M7 1 L9 2 L6 11 L3 10Z" fill="#555" /></svg>
          </UserOverlay>
        </StackedIcon>
      </TaskButton>
      <TaskButton $w={55} $ml={4} $light>
        <StackedIcon>
          <Fox size={28} />
          <UserOverlay><UserGlyph /></UserOverlay>
        </StackedIcon>
      </TaskButton>
      <TrayArea>
        <TrayItem $ml={6}>
          <svg width="9" height="5"><polygon points="0,5 4.5,0 9,5" fill="#fff" /></svg>
        </TrayItem>
        <TrayItem $ml={12}>
          <svg width="16" height="16" viewBox="0 0 16 16">
            <circle cx="8" cy="8" r="7" fill="#f2c469" />
            <path d="M1 9 Q6 5 15 9 A7 7 0 0 1 1 9Z" fill="#5f82b0" />
          </svg>
        </TrayItem>
        <TrayItem $ml={9}>
          <svg width="18" height="18" viewBox="0 0 18 18" fill="none" stroke="#fff" strokeWidth="1.6">
            <rect x="2" y="3" width="10" height="13" rx="2" stroke="#222" fill="#fff" />
            <path d="M11 8 H17 V11 H11 M13 8 V4 M16 8 V4" />
            <path d="M14 11 V16" />
          </svg>
        </TrayItem>
        <TrayItem $ml={8}>
          <svg width="18" height="18" viewBox="0 0 18 18">
            <path d="M2 1 V17" stroke="#fff" strokeWidth="2" />
            <polygon points="3,2 13,3 13,10 3,9" fill="#fff" />
            <circle cx="12" cy="13" r="5" fill="#d92b2b" />
            <path d="M10 11 L14 15 M14 11 L10 15" stroke="#fff" strokeWidth="1.4" />
          </svg>
        </TrayItem>
        <TrayItem $ml={6}>
          <svg width="18" height="18" viewBox="0 0 18 18" fill="none" stroke="#fff" strokeWidth="1.6">
            <rect x="6" y="4" width="11" height="9" stroke="#fff" fill="#1f7c62" />
            <path d="M11 13 V16 M8 16 H15 M3 1 V4 M6 1 V4" />
            <rect x="1" y="4" width="6" height="4" fill="#fff" />
            <path d="M4 8 V14" />
          </svg>
        </TrayItem>
        <TrayItem $ml={5}>
          <svg width="18" height="18" viewBox="0 0 18 18">
            <polygon points="1,6 4,6 8,2 8,16 4,12 1,12" fill="#fff" />
            <circle cx="12" cy="12" r="5" fill="#e02b2b" />
            <path d="M9 12 H15" stroke="#fff" strokeWidth="1.6" transform="rotate(-30 12 12)" />
          </svg>
        </TrayItem>
        <Clock>
          12:03
          <br />
          04/11/2019
        </Clock>
        <ShowDesktop />
      </TrayArea>
    </Taskbar>
    <MetaMaskPopup />
  </Desktop>
);

export default App;
